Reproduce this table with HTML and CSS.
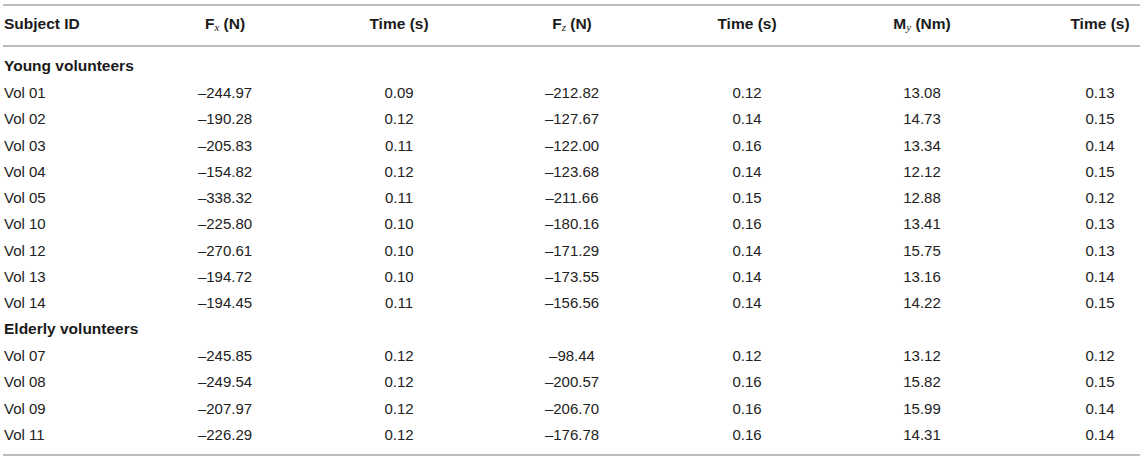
FILE: index.html
```html
<!DOCTYPE html>
<html>
<head>
<meta charset="utf-8">
<link rel="stylesheet" href="styles.css">
</head>
<body>
<table class="data">
  <colgroup>
    <col class="c-id">
    <col class="c-fx">
    <col class="c-t1">
    <col class="c-fz">
    <col class="c-t2">
    <col class="c-my">
    <col class="c-t3">
  </colgroup>
  <thead>
    <tr>
      <th class="left">Subject ID</th>
      <th>F<sub>x</sub> (N)</th>
      <th>Time (s)</th>
      <th>F<sub>z</sub> (N)</th>
      <th>Time (s)</th>
      <th>M<sub>y</sub> (Nm)</th>
      <th class="last">Time (s)</th>
    </tr>
  </thead>
  <tbody>
    <tr class="group first"><td class="left" colspan="7">Young volunteers</td></tr>
    <tr><td class="left">Vol 01</td><td>–244.97</td><td>0.09</td><td>–212.82</td><td>0.12</td><td>13.08</td><td class="last">0.13</td></tr>
    <tr><td class="left">Vol 02</td><td>–190.28</td><td>0.12</td><td>–127.67</td><td>0.14</td><td>14.73</td><td class="last">0.15</td></tr>
    <tr><td class="left">Vol 03</td><td>–205.83</td><td>0.11</td><td>–122.00</td><td>0.16</td><td>13.34</td><td class="last">0.14</td></tr>
    <tr><td class="left">Vol 04</td><td>–154.82</td><td>0.12</td><td>–123.68</td><td>0.14</td><td>12.12</td><td class="last">0.15</td></tr>
    <tr><td class="left">Vol 05</td><td>–338.32</td><td>0.11</td><td>–211.66</td><td>0.15</td><td>12.88</td><td class="last">0.12</td></tr>
    <tr><td class="left">Vol 10</td><td>–225.80</td><td>0.10</td><td>–180.16</td><td>0.16</td><td>13.41</td><td class="last">0.13</td></tr>
    <tr><td class="left">Vol 12</td><td>–270.61</td><td>0.10</td><td>–171.29</td><td>0.14</td><td>15.75</td><td class="last">0.13</td></tr>
    <tr><td class="left">Vol 13</td><td>–194.72</td><td>0.10</td><td>–173.55</td><td>0.14</td><td>13.16</td><td class="last">0.14</td></tr>
    <tr><td class="left">Vol 14</td><td>–194.45</td><td>0.11</td><td>–156.56</td><td>0.14</td><td>14.22</td><td class="last">0.15</td></tr>
    <tr class="group"><td class="left" colspan="7">Elderly volunteers</td></tr>
    <tr><td class="left">Vol 07</td><td>–245.85</td><td>0.12</td><td>–98.44</td><td>0.12</td><td>13.12</td><td class="last">0.12</td></tr>
    <tr><td class="left">Vol 08</td><td>–249.54</td><td>0.12</td><td>–200.57</td><td>0.16</td><td>15.82</td><td class="last">0.15</td></tr>
    <tr><td class="left">Vol 09</td><td>–207.97</td><td>0.12</td><td>–206.70</td><td>0.16</td><td>15.99</td><td class="last">0.14</td></tr>
    <tr class="end"><td class="left">Vol 11</td><td>–226.29</td><td>0.12</td><td>–176.78</td><td>0.16</td><td>14.31</td><td class="last">0.14</td></tr>
  </tbody>
</table>
</body>
</html>
```

FILE: styles.css
```css
html, body {
  margin: 0;
  padding: 0;
  background: #ffffff;
}

body {
  padding: 4px 5px 0 3px;
  font-family: "Liberation Sans", Arial, Helvetica, sans-serif;
  color: #222222;
}

.data {
  width: 1137px;
  border-collapse: collapse;
  table-layout: fixed;
  font-size: 15px;
}

.c-id { width: 135px; }
.c-fx { width: 174px; }
.c-t1 { width: 174px; }
.c-fz { width: 172px; }
.c-t2 { width: 178px; }
.c-my { width: 172px; }
.c-t3 { width: 132px; }

.data thead tr {
  border-top: 2px solid #bdbdbd;
  border-bottom: 2px solid #bdbdbd;
}

.data th {
  font-size: 15.5px;
  font-weight: bold;
  height: 36px;
  padding: 0 0 3px 0;
  text-align: center;
  vertical-align: middle;
  color: #1a1a1a;
}

.data td {
  height: 26.3px;
  padding: 0;
  text-align: center;
  vertical-align: middle;
}

.data .left {
  text-align: left;
  padding-left: 1px;
}

.data .last {
  padding-left: 52px;
}

.data .group td {
  font-size: 15.5px;
  font-weight: bold;
  color: #1a1a1a;
}

.data .first td {
  padding-top: 6px;
}

.data .end {
  border-bottom: 2px solid #bdbdbd;
}

.data .end td {
  padding-bottom: 7px;
}

sub {
  font-family: "Liberation Serif", "Times New Roman", serif;
  font-style: italic;
  font-weight: normal;
  font-size: 11px;
  line-height: 0;
  vertical-align: -2px;
}
```
